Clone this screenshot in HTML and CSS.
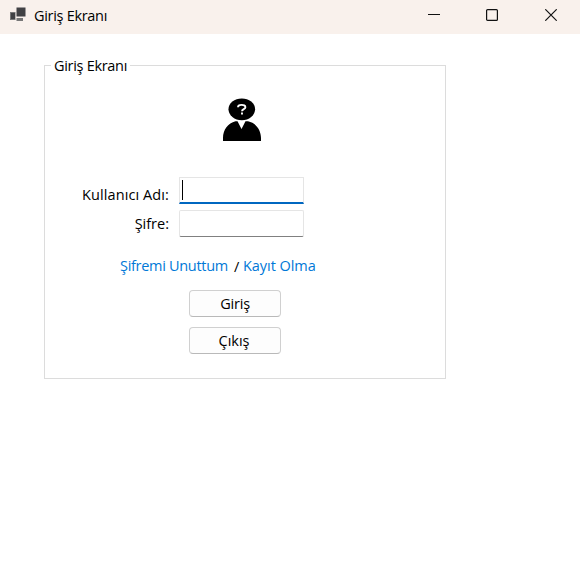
FILE: index.html
```html
<!DOCTYPE html>
<html lang="tr">
<head>
<meta charset="utf-8">
<title>Giriş Ekranı</title>
<link rel="stylesheet" href="styles.css">
</head>
<body>
<header class="titlebar">
  <svg class="app-icon" width="17" height="16" viewBox="0 0 17 16"><path fill="#777" d="M0 5h5.500v8H0zM6.500 11h6.500v3H6.500z"/><path fill="#414144" d="M6.500 .5h9v9h-9zM1 6h4v6H1z"/></svg>
  <h1 class="title">Giriş Ekranı</h1>
  <div class="controls">
    <svg width="12" height="12" viewBox="0 0 12 12"><path d="M0 5.500h12" stroke-width="1"/></svg>
    <svg width="12" height="12" viewBox="0 0 12 12"><rect x=".6" y=".6" width="10.800" height="10.800" rx="1"/></svg>
    <svg width="12" height="12" viewBox="0 0 12 12"><path d="M.3.3l11.400 11.400M11.700.3L.3 11.700"/></svg>
  </div>
</header>
<main>
  <fieldset class="group">
    <legend>Giriş Ekranı</legend>
    <svg class="avatar" width="38" height="43" viewBox="0 0 38 43">
      <ellipse cx="18.800" cy="11.300" rx="13.300" ry="10.900"/>
      <path d="M0 43V40C0 32 5 25 12.500 23.300H14.500L18.500 31L22.500 23.300H25C33 25 38 32 38 40V43Z"/>
      <path fill="none" stroke="#fff" stroke-width="1.900" d="M15 9.200C15 6.200 22.400 6 22.400 9.200C22.400 11.400 19 10.700 19 13.200M19 14.500V16.500"/>
    </svg>
    <div class="row"><label class="user">Kullanıcı Adı:</label><div class="field focused"><span class="caret"></span></div></div>
    <div class="row second"><label class="pass">Şifre:</label><div class="field"></div></div>
    <div class="links"><a class="forgot">Şifremi Unuttum</a><span class="slash">/</span><a class="register">Kayıt Olma</a></div>
    <div class="buttons"><button>Giriş</button><button class="exit">Çıkış</button></div>
  </fieldset>
</main>
</body>
</html>
```

FILE: styles.css
```css
* { box-sizing: border-box; }
body { margin: 0; height: 573px; overflow: hidden; background: #fff; color: #000; font: 14.5px/18px "Open Sans", "Noto Sans", sans-serif; }
.titlebar { display: flex; height: 34px; padding: 8px 23px 0 10px; background: #f9f1ec; }
.app-icon { flex: none; margin-top: -1px; }
.title { margin: -1px 0 0 7px; font-size: 14.5px; font-weight: 400; line-height: 18px; letter-spacing: -.3px; white-space: nowrap; }
.controls { display: flex; gap: 47px; margin: 1px 0 0 auto; fill: none; stroke: #111; stroke-width: 1.2; }
.controls svg:first-child { margin-right: -1px; }
.group { width: 402px; height: 322px; margin: 23px 0 0 44px; padding: 0; border: 1px solid #dcdcdc; }
legend { margin-left: 6px; width: 79px; padding: 0 3px; height: 17px; letter-spacing: -.3px; white-space: nowrap; }
.avatar { display: block; margin: 24px 0 0 178px; }
.row { display: flex; height: 27px; margin-top: 36px; }
.row.second { margin-top: 6px; }
label { width: 124px; margin: 9px 10px 0 0; text-align: right; white-space: nowrap; letter-spacing: .1px; }
.pass { margin-top: 5px; letter-spacing: 0; }
.field { width: 125px; height: 27px; padding: 3px 0 0 3px; border: 1px solid #e5e5e5; border-bottom-color: #808080; border-radius: 2px; }
.focused { padding-top: 2px; border-bottom: 2px solid #0067c0; border-radius: 1px 1px 0 0; }
.caret { display: block; width: 1px; height: 20px; margin-left: -1px; background: #000; }
.links { display: flex; height: 18px; margin: 20px 0 0 75px; white-space: nowrap; color: #0078d7; letter-spacing: -.3px; }
.forgot { width: 108px; }
.slash { width: 9px; margin: 1px 0 0 6px; color: #000; }
.register { letter-spacing: -.05px; }
.buttons { display: flex; flex-direction: column; gap: 10px; width: 92px; margin: 15px 0 0 144px; }
button { height: 27px; padding: 0; border: 1px solid #d0d0d0; border-bottom-color: #b9b9b9; border-radius: 4px; background: #fdfdfd; color: #000; font: inherit; letter-spacing: -.2px; }
.exit { padding-right: 2px; letter-spacing: 0; }
```
